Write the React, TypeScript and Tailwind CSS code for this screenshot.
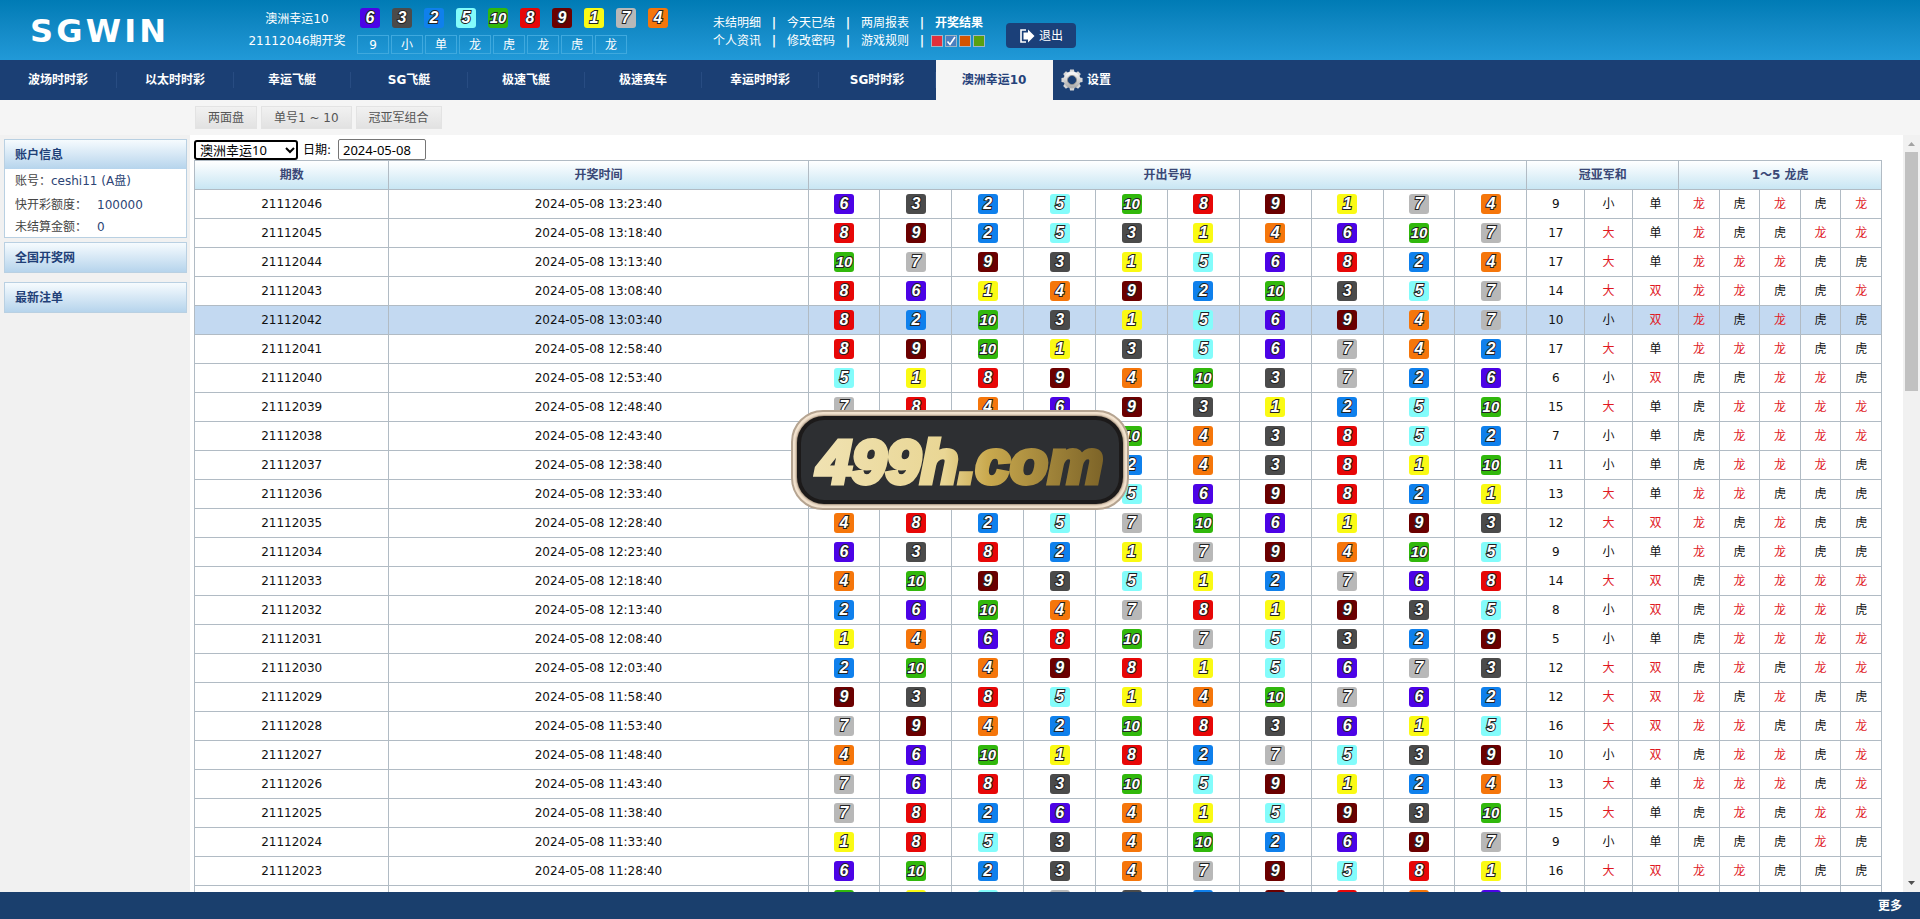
import { Fragment, useState } from 'react';
import clsx from 'clsx';

type Draw = { id: number; time: string; balls: number[] };

const BALL_COLORS: Record<number, string> = {
  1: 'bg-[#fafa14]',
  2: 'bg-[#0f80ec]',
  3: 'bg-[#4b4b4b]',
  4: 'bg-[#f5760b]',
  5: 'bg-[#83fcfb]',
  6: 'bg-[#4c03e6]',
  7: 'bg-[#b8b8b8]',
  8: 'bg-[#e70707]',
  9: 'bg-[#6b0000]',
  10: 'bg-[#31b80c]',
};

const DRAWS: Draw[] = [
  { id: 21112046, time: '13:23:40', balls: [6, 3, 2, 5, 10, 8, 9, 1, 7, 4] },
  { id: 21112045, time: '13:18:40', balls: [8, 9, 2, 5, 3, 1, 4, 6, 10, 7] },
  { id: 21112044, time: '13:13:40', balls: [10, 7, 9, 3, 1, 5, 6, 8, 2, 4] },
  { id: 21112043, time: '13:08:40', balls: [8, 6, 1, 4, 9, 2, 10, 3, 5, 7] },
  { id: 21112042, time: '13:03:40', balls: [8, 2, 10, 3, 1, 5, 6, 9, 4, 7] },
  { id: 21112041, time: '12:58:40', balls: [8, 9, 10, 1, 3, 5, 6, 7, 4, 2] },
  { id: 21112040, time: '12:53:40', balls: [5, 1, 8, 9, 4, 10, 3, 7, 2, 6] },
  { id: 21112039, time: '12:48:40', balls: [7, 8, 4, 6, 9, 3, 1, 2, 5, 10] },
  { id: 21112038, time: '12:43:40', balls: [1, 6, 9, 7, 10, 4, 3, 8, 5, 2] },
  { id: 21112037, time: '12:38:40', balls: [5, 6, 9, 7, 2, 4, 3, 8, 1, 10] },
  { id: 21112036, time: '12:33:40', balls: [10, 3, 4, 7, 5, 6, 9, 8, 2, 1] },
  { id: 21112035, time: '12:28:40', balls: [4, 8, 2, 5, 7, 10, 6, 1, 9, 3] },
  { id: 21112034, time: '12:23:40', balls: [6, 3, 8, 2, 1, 7, 9, 4, 10, 5] },
  { id: 21112033, time: '12:18:40', balls: [4, 10, 9, 3, 5, 1, 2, 7, 6, 8] },
  { id: 21112032, time: '12:13:40', balls: [2, 6, 10, 4, 7, 8, 1, 9, 3, 5] },
  { id: 21112031, time: '12:08:40', balls: [1, 4, 6, 8, 10, 7, 5, 3, 2, 9] },
  { id: 21112030, time: '12:03:40', balls: [2, 10, 4, 9, 8, 1, 5, 6, 7, 3] },
  { id: 21112029, time: '11:58:40', balls: [9, 3, 8, 5, 1, 4, 10, 7, 6, 2] },
  { id: 21112028, time: '11:53:40', balls: [7, 9, 4, 2, 10, 8, 3, 6, 1, 5] },
  { id: 21112027, time: '11:48:40', balls: [4, 6, 10, 1, 8, 2, 7, 5, 3, 9] },
  { id: 21112026, time: '11:43:40', balls: [7, 6, 8, 3, 10, 5, 9, 1, 2, 4] },
  { id: 21112025, time: '11:38:40', balls: [7, 8, 2, 6, 4, 1, 5, 9, 3, 10] },
  { id: 21112024, time: '11:33:40', balls: [1, 8, 5, 3, 4, 10, 2, 6, 9, 7] },
  { id: 21112023, time: '11:28:40', balls: [6, 10, 2, 3, 4, 7, 9, 5, 8, 1] },
  { id: 21112022, time: '11:23:40', balls: [10, 1, 5, 7, 3, 2, 9, 8, 4, 6] },
];

const GAMES = [
  '波场时时彩',
  '以太时时彩',
  '幸运飞艇',
  'SG飞艇',
  '极速飞艇',
  '极速赛车',
  '幸运时时彩',
  'SG时时彩',
  '澳洲幸运10',
];

const LINKS = [
  ['未结明细', '今天已结', '两周报表', '开奖结果'],
  ['个人资讯', '修改密码', '游戏规则'],
];

const SKINS = [
  { name: '红色', color: 'bg-[#e2303c]' },
  { name: '蓝色', color: 'bg-[#4a7fc0]' },
  { name: '橙色', color: 'bg-[#d35400]' },
  { name: '绿色', color: 'bg-[#5aa010]' },
];

const SUB_TABS = ['两面盘', '单号1 ~ 10', '冠亚军组合'];

const RED = ['大', '双', '龙'];

function summarize(balls: number[]) {
  const sum = balls[0] + balls[1];
  return [
    String(sum),
    sum > 11 ? '大' : '小',
    sum % 2 ? '单' : '双',
    ...balls.slice(0, 5).map((n, i) => (n > balls[9 - i] ? '龙' : '虎')),
  ];
}

function Ball({ n }: { n: number }) {
  return (
    <span
      className={clsx(
        'inline-flex size-5 items-center justify-center rounded-[3px] align-middle font-["Liberation_Sans",sans-serif] leading-5 font-bold text-white italic [-webkit-text-stroke:2px_#222] [paint-order:stroke_fill]',
        n === 10 ? 'text-[15px]' : 'text-[16px]',
        BALL_COLORS[n],
      )}
    >
      {n}
    </span>
  );
}

function Gear() {
  const teeth = [0, 45, 90, 135, 180, 225, 270, 315];
  return (
    <svg viewBox="0 0 24 24" className="size-[22px]" aria-hidden="true">
      <defs>
        <linearGradient id="gear" x1="0" y1="0" x2="0" y2="1">
          <stop offset="0" stopColor="#f4f4f4" />
          <stop offset="1" stopColor="#b0b0b0" />
        </linearGradient>
      </defs>
      {teeth.map((deg) => (
        <path key={deg} d="M9 5 9.900 .5h4.200L15 5z" fill="#d6d6d6" transform={`rotate(${deg} 12 12)`} />
      ))}
      <circle cx="12" cy="12" r="7" fill="none" stroke="url(#gear)" strokeWidth="4.500" />
      <circle cx="12" cy="12" r="5" fill="none" stroke="#8a8a8a" strokeWidth="1" />
    </svg>
  );
}

function Header() {
  const latest = DRAWS[0];
  return (
    <header className="flex h-[60px] shrink-0 bg-linear-to-b from-[#007bb5] to-[#2199d8] text-white">
      <div className="flex w-[248px] shrink-0 items-center pt-0.5 pl-[30px] text-[32px] font-bold tracking-widest">
        SGWIN
      </div>
      <div className="flex w-[98px] shrink-0 flex-col items-center gap-1 pt-[10px] leading-[18px] whitespace-nowrap">
        <div>澳洲幸运10</div>
        <div>{latest.id}期开奖</div>
      </div>
      <div className="ml-[11px] flex w-[356px] shrink-0 flex-col gap-[7px] pt-2">
        <div className="flex gap-3 pl-[3px]">
          {latest.balls.map((n) => (
            <Ball key={n} n={n} />
          ))}
        </div>
        <div className="flex gap-0.5">
          {summarize(latest.balls).map((v, i) => (
            <span
              key={i}
              className="h-[19px] w-8 border border-[#3fa9de] text-center text-[12px] leading-[18px]"
            >
              {v}
            </span>
          ))}
        </div>
      </div>
      <div className="flex shrink-0 flex-col pt-[14px] leading-[18px]">
        {LINKS.map((row, r) => (
          <div key={r} className="flex">
            {row.map((label, i) => (
              <Fragment key={label}>
                {i > 0 && <span className="w-[26px] text-center font-bold">|</span>}
                <a href="#" className={clsx(label === '开奖结果' && 'font-bold')}>
                  {label}
                </a>
              </Fragment>
            ))}
            {r === 1 && (
              <>
                <span className="w-[26px] text-center font-bold">|</span>
                <div className="-ml-1 flex items-center gap-0.5">
                  {SKINS.map((s, i) => (
                    <button
                      key={s.name}
                      type="button"
                      aria-label={s.name}
                      className={clsx('size-3 border border-[#9db6c9]', s.color)}
                    >
                      {i === 1 && (
                        <svg viewBox="0 0 10 10" className="size-full" aria-hidden="true">
                          <path d="M1.5 5.5 4 8.5 9 1" fill="none" stroke="#fff" strokeWidth="1.6" />
                        </svg>
                      )}
                    </button>
                  ))}
                </div>
              </>
            )}
          </div>
        ))}
      </div>
      <button
        type="button"
        className="mt-[23px] ml-[21px] flex h-[25px] w-[70px] items-center justify-center gap-1 rounded bg-[#1b4079]"
      >
        <svg viewBox="0 0 16 16" className="size-4" aria-hidden="true">
          <path d="M7 2H2v12h5" fill="none" stroke="#fff" strokeWidth="1.6" />
          <path d="M4.5 4.5H9V1.500l6.500 6.500-6.500 6.500v-3H4.5z" fill="#fff" />
        </svg>
        退出
      </button>
    </header>
  );
}

function Nav() {
  return (
    <nav className="flex h-10 shrink-0 bg-[#1b3f74] font-bold text-white">
      {GAMES.map((g, i) => {
        const active = i === GAMES.length - 1;
        return (
          <a
            key={g}
            href="#"
            className={clsx('flex w-[117px] items-center', active && 'bg-[#f5f5f5] text-[#26427a]')}
          >
            <span
              className={clsx(
                'h-4 flex-1 border-r text-center leading-4',
                active ? 'border-transparent' : 'border-[#284c82]',
              )}
            >
              {g}
            </span>
          </a>
        );
      })}
      <a href="#" className="ml-2 flex items-center gap-1">
        <Gear />
        设置
      </a>
    </nav>
  );
}

function PanelTitle({ children }: { children: string }) {
  return (
    <h2 className="h-[29px] bg-linear-to-b from-[#f6fbfe] to-[#b6d4ec] pl-2.5 leading-[30px] font-bold text-[#1f3f77]">
      {children}
    </h2>
  );
}

function Sidebar() {
  return (
    <aside className="w-[190px] shrink-0 bg-[#f1f1f1] pt-1 pr-[3px] pl-1">
      <section className="h-[99px] border border-[#b9d0e2] bg-white text-[#444]">
        <PanelTitle>账户信息</PanelTitle>
        <dl className="pl-2.5 leading-[18px]">
          <div className="flex pt-[3px]">
            <dt>账号：</dt>
            <dd className="text-[#2c4475]">ceshi11 (A盘)</dd>
          </div>
          <div className="flex pt-1.5">
            <dt className="w-[82px]">快开彩额度：</dt>
            <dd className="text-[#2c4475]">100000</dd>
          </div>
          <div className="flex pt-1">
            <dt className="w-[82px]">未结算金额：</dt>
            <dd className="text-[#2c4475]">0</dd>
          </div>
        </dl>
      </section>
      <section className="mt-1 border border-[#b9d0e2]">
        <PanelTitle>全国开奖网</PanelTitle>
      </section>
      <section className="mt-[9px] border border-[#b9d0e2]">
        <PanelTitle>最新注单</PanelTitle>
      </section>
    </aside>
  );
}

function Results() {
  const [game, setGame] = useState('澳洲幸运10');
  const [date, setDate] = useState('2024-05-08');
  const th = 'h-[29px] border border-[#b1bbc4] p-0 font-bold text-[#3a4876]';
  const td = 'h-[29px] border border-[#b1bbc4] p-0';

  return (
    <main className="min-w-0 flex-1 overflow-hidden bg-white pt-1 pr-[21px] pl-1">
      <div className="flex h-[21px] items-center text-black">
        <label htmlFor="game">
          <span className="hidden">彩种</span>
        </label>
        <select
          id="game"
          value={game}
          onChange={(e) => setGame(e.target.value)}
          className="h-5 w-[104px] rounded-[3px] bg-white px-0.5 font-['Noto_Sans','Noto_Sans_CJK_SC',sans-serif] text-[13px] ring-2 ring-black ring-inset"
        >
          {GAMES.map((g) => (
            <option key={g}>{g}</option>
          ))}
        </select>
        <label htmlFor="date" className="ml-[5px] w-[35px] whitespace-nowrap">
          日期:
        </label>
        <input
          id="date"
          value={date}
          onChange={(e) => setDate(e.target.value)}
          className="h-[21px] w-[88px] rounded-xs border border-[#767676] px-1 font-['Noto_Sans',sans-serif] text-[13px]"
        />
      </div>
      <table className="w-full table-fixed border-collapse text-center leading-[18px] text-[#111]">
        <colgroup>
          <col className="w-[192px]" />
          <col className="w-[414px]" />
          {DRAWS[0].balls.map((n) => (
            <col key={n} className="w-[71px]" />
          ))}
          <col className="w-[57px]" />
          <col className="w-[47px]" />
          <col className="w-[46px]" />
          {[1, 2, 3, 4, 5].map((n) => (
            <col key={n} className="w-[40px]" />
          ))}
        </colgroup>
        <thead>
          <tr className="bg-linear-to-b from-white to-[#c6e5f3]">
            <th className={th}>期数</th>
            <th className={th}>开奖时间</th>
            <th className={th} colSpan={10}>
              开出号码
            </th>
            <th className={th} colSpan={3}>
              冠亚军和
            </th>
            <th className={th} colSpan={5}>
              1～5 龙虎
            </th>
          </tr>
        </thead>
        <tbody>
          {DRAWS.map((d) => (
            <tr key={d.id} className={clsx(d.id === 21112042 && 'bg-[#c3d9f1]')}>
              <td className={td}>{d.id}</td>
              <td className={td}>2024-05-08 {d.time}</td>
              {d.balls.map((n) => (
                <td key={n} className={clsx(td, 'leading-5')}>
                  <Ball n={n} />
                </td>
              ))}
              {summarize(d.balls).map((v, i) => (
                <td key={i} className={clsx(td, RED.includes(v) && 'text-[#e0191f]')}>
                  {v}
                </td>
              ))}
            </tr>
          ))}
        </tbody>
      </table>
    </main>
  );
}

function Scrollbar() {
  return (
    <div className="flex w-[17px] shrink-0 flex-col items-center bg-[#f1f1f1]" aria-hidden="true">
      <svg viewBox="0 0 17 17" className="size-[17px]">
        <path d="M5 11h7L8.500 7z" fill="#a3a3a3" />
      </svg>
      <div className="h-[239px] w-[13px] bg-[#c1c1c1]" />
      <svg viewBox="0 0 17 17" className="mt-auto size-[17px]">
        <path d="M5 6h7l-3.500 4z" fill="#505050" />
      </svg>
    </div>
  );
}

function Watermark() {
  return (
    <div className="pointer-events-none absolute inset-0 flex items-center justify-center">
      <div className="flex h-[100px] w-[338px] items-center justify-center rounded-[32px] border-2 border-[#b5a491] bg-[#f3e3cf] p-1">
        <div className="flex size-full items-center justify-center rounded-[27px] border-4 border-[#1c1a1a] bg-[#2d2f32] shadow-[0_0_2px_1px_#a08d78]">
          <svg viewBox="0 0 310 80" className="h-20 w-[310px] shrink-0" role="img" aria-label="499h.com">
            <defs>
              <linearGradient id="gold" x1="0" y1="0" x2="1" y2="0">
                <stop offset="0" stopColor="#f0e2b2" />
                <stop offset="0.45" stopColor="#e9d694" />
                <stop offset="0.6" stopColor="#c9a94e" />
                <stop offset="1" stopColor="#7d6428" />
              </linearGradient>
            </defs>
            <text
              x="155"
              y="63"
              textAnchor="middle"
              fill="url(#gold)"
              stroke="url(#gold)"
              strokeWidth="5"
              className="font-['Liberation_Sans',sans-serif] text-[62px] font-bold italic"
            >
              499h.com
            </text>
          </svg>
        </div>
      </div>
    </div>
  );
}

export default function App() {
  return (
    <div className="relative flex h-screen flex-col overflow-hidden bg-[#f5f5f5] font-['DejaVu_Sans','Noto_Sans_CJK_SC',sans-serif] text-[12px]">
      <Header />
      <Nav />
      <div className="flex h-[35px] shrink-0 gap-1 pt-1.5 pl-[195px]">
        {SUB_TABS.map((t) => (
          <a
            key={t}
            href="#"
            className="h-[23px] border border-[#e3e3e3] bg-linear-to-b from-[#f1f1f1] to-[#e2e2e2] px-3 leading-[23px] text-[#555]"
          >
            {t}
          </a>
        ))}
      </div>
      <div className="flex min-h-0 flex-1">
        <Sidebar />
        <Results />
        <Scrollbar />
      </div>
      <footer className="flex h-[27px] shrink-0 items-center justify-end bg-[#1a3f6d] pr-[18px] font-bold text-white">
        <a href="#">更多</a>
      </footer>
      <Watermark />
    </div>
  );
}
